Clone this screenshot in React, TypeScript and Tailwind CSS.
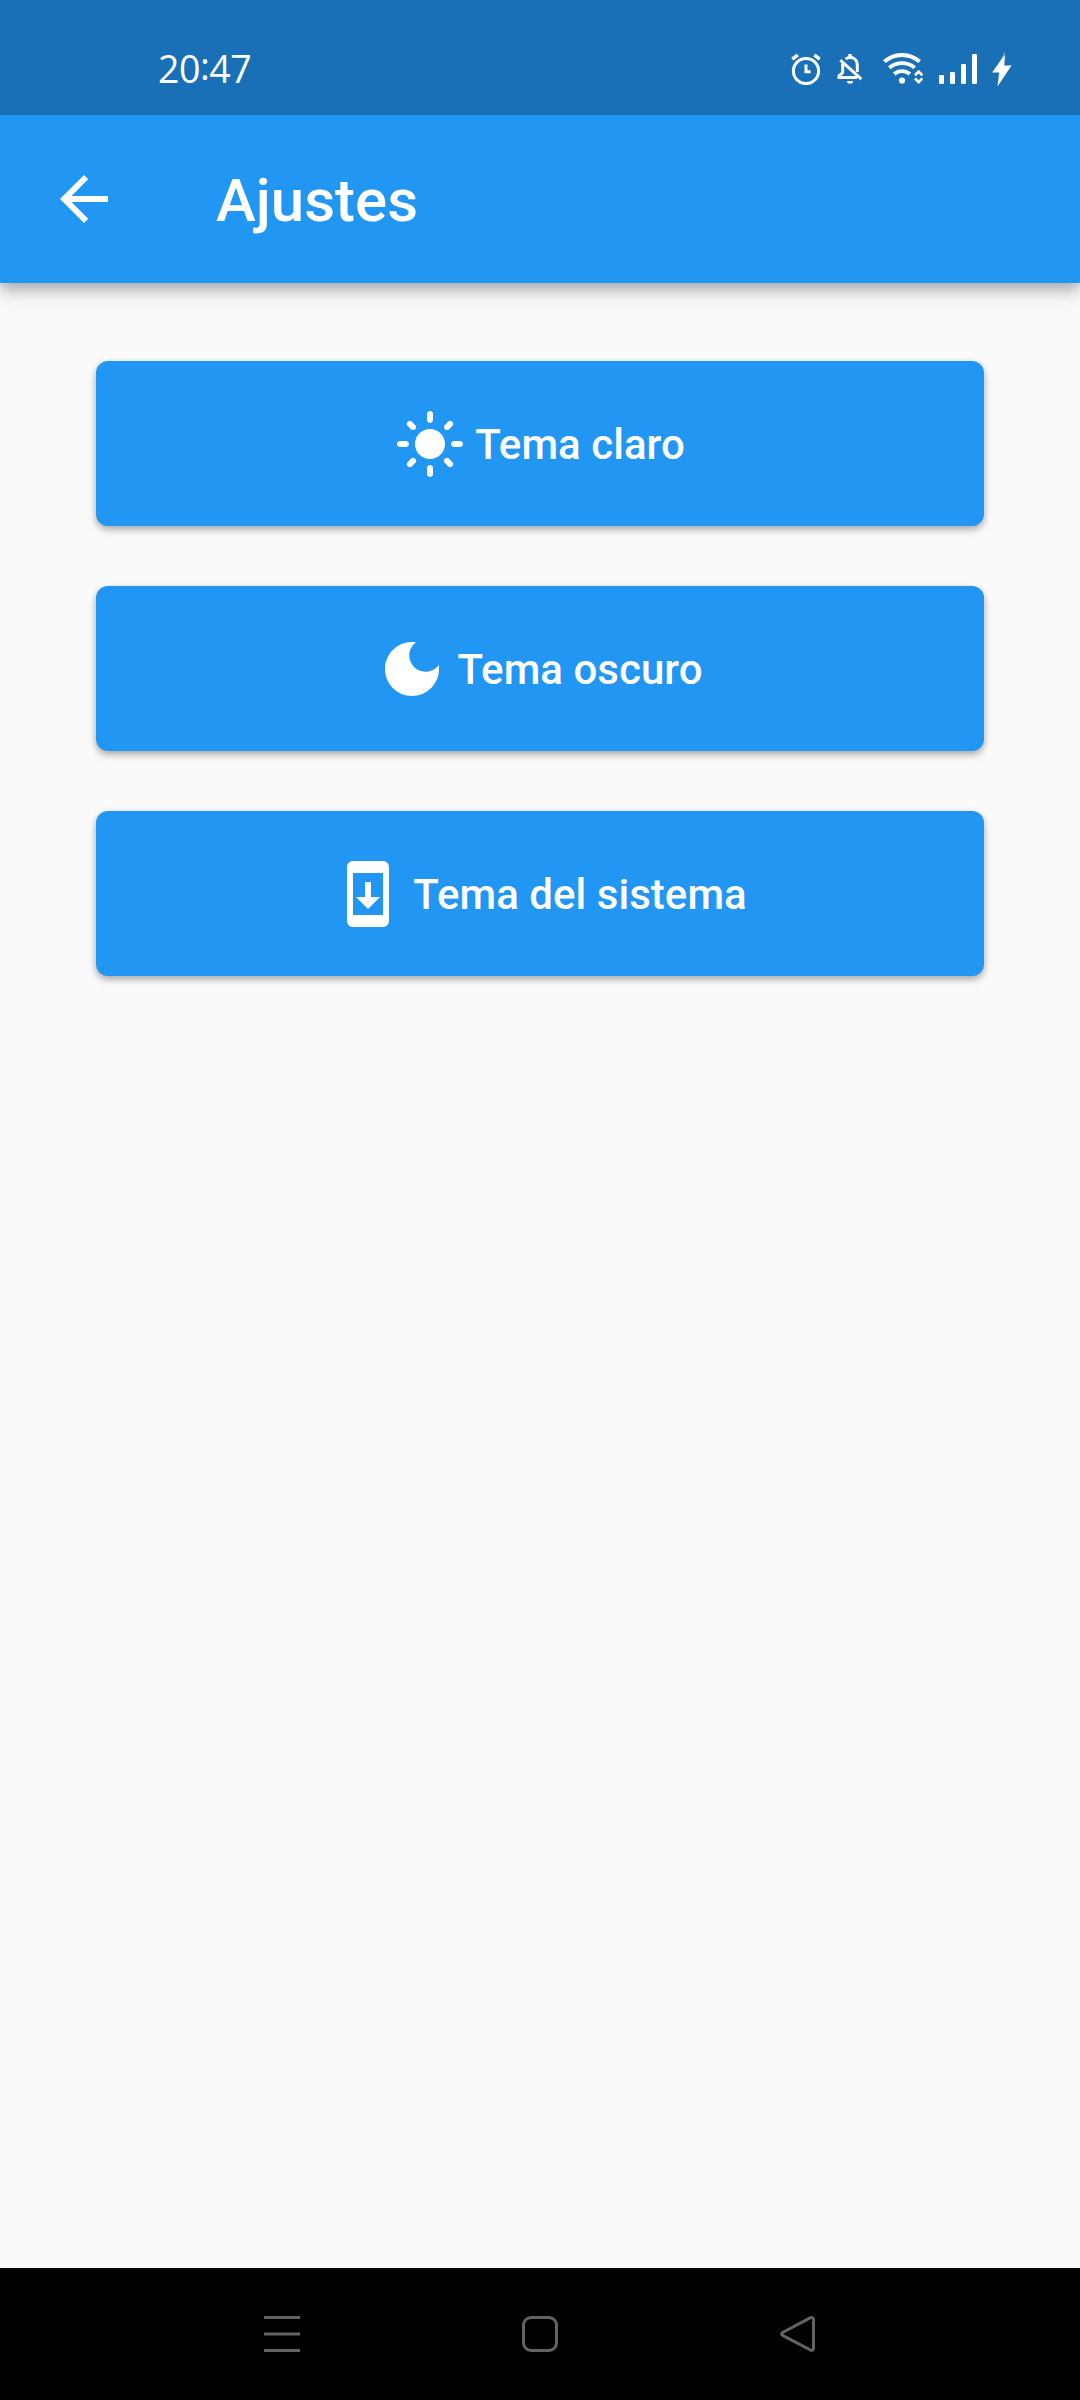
import React from "react";

const LIGHT =
  "M12 7c-2.76 0-5 2.24-5 5s2.24 5 5 5 5-2.24 5-5-2.24-5-5-5zM2 13h2c.55 0 1-.45 1-1s-.45-1-1-1H2c-.55 0-1 .45-1 1s.45 1 1 1zm18 0h2c.55 0 1-.45 1-1s-.45-1-1-1h-2c-.55 0-1 .45-1 1s.45 1 1 1zM11 2v2c0 .55.45 1 1 1s1-.45 1-1V2c0-.55-.45-1-1-1s-1 .45-1 1zm0 18v2c0 .55.45 1 1 1s1-.45 1-1v-2c0-.55-.45-1-1-1s-1 .45-1 1zM5.99 4.58a.996.996 0 00-1.41 0 .996.996 0 000 1.41l1.06 1.06c.39.39 1.03.39 1.41 0s.39-1.03 0-1.41L5.99 4.58zm12.37 12.37a.996.996 0 00-1.41 0 .996.996 0 000 1.41l1.06 1.06c.39.39 1.03.39 1.41 0a.996.996 0 000-1.41l-1.06-1.06zm1.06-10.96a.996.996 0 000-1.41.996.996 0 00-1.41 0l-1.06 1.06c-.39.39-.39 1.03 0 1.41s1.03.39 1.41 0l1.06-1.06zM7.05 18.36a.996.996 0 000-1.41.996.996 0 00-1.41 0l-1.06 1.06c-.39.39-.39 1.03 0 1.41s1.03.39 1.41 0l1.06-1.06z";
const DARK =
  "M12 3c-4.97 0-9 4.03-9 9s4.03 9 9 9 9-4.03 9-9c0-.46-.04-.92-.1-1.36-.98 1.37-2.58 2.26-4.4 2.26-2.98 0-5.4-2.42-5.4-5.4 0-1.81.89-3.42 2.26-4.4-.44-.06-.9-.1-1.36-.1z";
const SYSTEM =
  "M17 1.01L7 1c-1.1 0-2 .9-2 2v18c0 1.1.9 2 2 2h10c1.1 0 2-.9 2-2V3c0-1.1-.9-1.99-2-1.99zM17 19H7V5h10v14zm-1-6h-3V8h-2v5H8l4 4 4-4z";
const BACK = "M20 11H7.83l5.59-5.59L12 4l-8 8 8 8 1.41-1.41L7.83 13H20v-2z";

function Icon({ d }: { d: string }) {
  return (
    <svg viewBox="0 0 24 24" className="size-[72px] shrink-0 fill-white">
      <path d={d} />
    </svg>
  );
}

function ThemeButton({ icon, label }: { icon: string; label: string }) {
  return (
    <button className="flex h-[165px] w-full items-center justify-center gap-[9px] rounded-xl bg-[#2196f3] pr-px text-[42px] leading-none font-medium tracking-[0.04px] text-white shadow-[0_3px_6px_rgba(0,0,0,0.24),0_4px_10px_rgba(0,0,0,0.12)]">
      <Icon d={icon} />
      <span className="pt-0.5 whitespace-nowrap">{label}</span>
    </button>
  );
}

function AlarmIcon() {
  return (
    <svg viewBox="0 0 30 32" className="h-8 w-[30px]" fill="none" stroke="white">
      <circle cx="15" cy="18" r="12.6" strokeWidth="3" />
      <path d="M15 11.5v7.3h4.6" strokeWidth="3" />
      <path d="M1.3 6.2 6.8 1.8M28.7 6.2 23.2 1.8" strokeWidth="3.4" />
    </svg>
  );
}

function BellOffIcon() {
  return (
    <svg viewBox="0 0 26 30" className="h-[30px] w-[26px]" fill="none" stroke="white" strokeWidth="3">
      <path d="M8.5 5.2C10 4 11.3 3.6 13 3.6c4.3 0 7.3 3 7.3 7.2v7.3M5.7 9.5V18.5L2 22v1.4h18" />
      <path d="M3.3 6.2 24.3 25.2" />
      <path d="M13 0v3.5" strokeWidth="3.4" />
      <path d="M10 27h6a3 2.8 0 0 1-6 0z" fill="white" stroke="none" />
    </svg>
  );
}

function WifiIcon() {
  return (
    <svg viewBox="0 0 40 32" className="h-8 w-10" fill="none" stroke="white">
      <path d="M1.3 8.6C12-.3 26-.3 36.7 8.6" strokeWidth="3.9" />
      <path d="M6.3 14.8c7.7-6.2 17.7-6.2 25.4 0" strokeWidth="3.9" />
      <path d="M11.2 21c4.6-3.9 11-3.9 15.6 0" strokeWidth="3.9" />
      <circle cx="19" cy="27.5" r="3.1" fill="white" stroke="none" />
      <path d="m32 22.3 3.7-3.7 3.7 3.7M32 25.5l3.7 3.7 3.7-3.7" strokeWidth="2.7" />
    </svg>
  );
}

function SignalIcon() {
  return (
    <svg viewBox="0 0 38 30" className="h-[30px] w-[38px] fill-white">
      <rect x="0" y="21" width="5" height="9" rx="1.2" />
      <rect x="11" y="18" width="5" height="12" rx="1.2" />
      <rect x="22" y="10" width="5" height="20" rx="1.2" />
      <rect x="33" y="0" width="5" height="30" rx="1.2" />
    </svg>
  );
}

function BoltIcon() {
  return (
    <svg viewBox="0 0 20 36" className="h-9 w-5 fill-white">
      <path d="M13.3 0 6 13.5h6z" opacity=".35" />
      <path d="M10.2 7.5 0 21.5h7.2L5.5 35.5 19.5 14.5h-7.3L13 4z" />
    </svg>
  );
}

function StatusBar() {
  return (
    <div className="relative z-10 flex h-[115px] items-start justify-between bg-[#1a70b7] pr-[68px] pl-[158px] text-white">
      <div className="mt-[47px] flex font-['Open_Sans'] text-[37.5px] leading-[44px] tracking-[-0.5px]">
        20<span className="-mt-[3px]">:</span>47
      </div>
      <div className="mt-[51px] flex h-9 items-center">
        <AlarmIcon />
        <div className="w-4" />
        <BellOffIcon />
        <div className="w-5" />
        <WifiIcon />
        <div className="w-4" />
        <SignalIcon />
        <div className="w-[15px]" />
        <BoltIcon />
      </div>
    </div>
  );
}

function NavBar() {
  return (
    <nav className="flex h-[132px] items-center justify-center gap-[222px] bg-black text-[#636363]">
      <svg viewBox="0 0 36 36" className="size-9" fill="none" stroke="currentColor" strokeWidth="3">
        <path d="M0 1.5h36M0 18h36M0 34.5h36" />
      </svg>
      <div className="size-9 rounded-[9px] border-3 border-current" />
      <svg viewBox="0 0 36 36" className="size-9" fill="none" stroke="currentColor" strokeWidth="3" strokeLinejoin="round">
        <path d="M2.6 16.5 30.6 1.7Q33.5 1 33.5 4v28q0 3-3 2L2.6 19.3q-2-1.4 0-2.8z" />
      </svg>
    </nav>
  );
}

export default function App() {
  return (
    <div className="flex h-[2400px] w-[1080px] flex-col overflow-hidden bg-[#fafafa] font-['Roboto',sans-serif]">
      <StatusBar />
      <header className="flex h-[168px] items-center bg-[#2196f3] pl-12 text-white shadow-[0_6px_12px_rgba(0,0,0,0.22),0_10px_20px_rgba(0,0,0,0.13)]">
        <Icon d={BACK} />
        <h1 className="ml-24 pt-[3px] text-[60px] leading-none font-medium">Ajustes</h1>
      </header>
      <main className="flex flex-1 flex-col gap-[60px] px-24 pt-[78px]">
        <ThemeButton icon={LIGHT} label="Tema claro" />
        <ThemeButton icon={DARK} label="Tema oscuro" />
        <ThemeButton icon={SYSTEM} label="Tema del sistema" />
      </main>
      <NavBar />
    </div>
  );
}
